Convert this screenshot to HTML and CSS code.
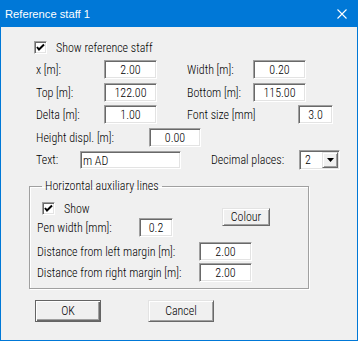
FILE: index.html
```html
<!DOCTYPE html>
<html lang="en">

<head>
  <meta charset="UTF-8">
  <title>Reference staff 1</title>
  <link rel="stylesheet" href="styles.css">
</head>

<body>
  <div class="window">
    <div class="titlebar">
      <span class="title">Reference staff 1</span>
      <svg class="close" width="10" height="10" viewBox="0 0 10 10">
        <path d="M0.5 0.5 L9.5 9.5 M9.5 0.5 L0.5 9.5" stroke="#fff" stroke-width="1.1" fill="none" />
      </svg>
    </div>

    <div class="content">
      <div class="check-row">
        <span class="checkbox"><svg width="11" height="11" viewBox="0 0 11 11"><path d="M2 5 L4 7.5 L9 2.5" stroke="#000" stroke-width="2" fill="none" /></svg></span>
        <span>Show reference staff</span>
      </div>

      <div class="row row-1">
        <span class="lbl w69">x [m]:</span>
        <input class="field w53" value="2.00">
        <span class="spacer"></span>
        <span class="lbl w68">Width [m]:</span>
        <input class="field w53" value="0.20">
      </div>
      <div class="row row-2">
        <span class="lbl w69">Top [m]:</span>
        <input class="field w53" value="122.00">
        <span class="spacer"></span>
        <span class="lbl w68">Bottom [m]:</span>
        <input class="field w53" value="115.00">
      </div>
      <div class="row row-3">
        <span class="lbl w69">Delta [m]:</span>
        <input class="field w53" value="1.00">
        <span class="spacer"></span>
        <span class="lbl w113">Font size [mm]</span>
        <input class="field w35" value="3.0">
      </div>
      <div class="row row-4">
        <span class="lbl w114">Height displ. [m]:</span>
        <input class="field w52" value="0.00">
      </div>
      <div class="row row-5">
        <span class="lbl w45">Text:</span>
        <input class="field w101 left short" value="m AD">
        <span class="spacer"></span>
        <span class="lbl w90">Decimal places:</span>
        <div class="combo">
          <span class="combo-value">2</span>
          <span class="combo-btn"><svg width="7" height="4" viewBox="0 0 7 4"><path d="M0 0 H7 L3.5 4 Z" fill="#000" /></svg></span>
        </div>
      </div>

      <fieldset class="group">
        <legend>Horizontal auxiliary lines</legend>
        <div class="group-top">
          <div class="group-left">
            <div class="check-row show-row">
              <span class="checkbox"><svg width="11" height="11" viewBox="0 0 11 11"><path d="M2 5 L4 7.5 L9 2.5" stroke="#000" stroke-width="2" fill="none" /></svg></span>
              <span>Show</span>
            </div>
            <div class="row pen-row">
              <span class="lbl w104">Pen width [mm]:</span>
              <input class="field w34" value="0.2">
            </div>
          </div>
          <button class="btn colour-btn">Colour</button>
        </div>
        <div class="row dist-left">
          <span class="lbl w164">Distance from left margin [m]:</span>
          <input class="field w53" value="2.00">
        </div>
        <div class="row dist-right">
          <span class="lbl w164">Distance from right margin [m]:</span>
          <input class="field w53" value="2.00">
        </div>
      </fieldset>

      <div class="buttons">
        <button class="btn big default">OK</button>
        <button class="btn big">Cancel</button>
      </div>
    </div>
  </div>
</body>

</html>
```

FILE: styles.css
```css
body {
  margin: 0;
  width: 358px;
  height: 341px;
  overflow: hidden;
  font-family: Roboto, "Liberation Sans", sans-serif;
  font-stretch: 75%;
  font-weight: 350;
  font-size: 12px;
  color: #000;
}

.window {
  box-sizing: border-box;
  width: 358px;
  height: 341px;
  border: 1px solid #0078d7;
  border-top: none;
  background-color: #f0f0f0;
}

.titlebar {
  display: flex;
  align-items: center;
  justify-content: space-between;
  height: 27px;
  margin: 0 -1px;
  padding: 0 11px 0 5px;
  background-color: #0078d7;
  color: #fff;
}

.title {
  font-family: "Liberation Sans", sans-serif;
  font-stretch: normal;
  font-weight: 400;
  font-size: 11.2px;
}

.close {
  display: block;
}

.content {
  padding: 14px 0 0 33px;
}

.check-row {
  display: flex;
  align-items: center;
  height: 13px;
  gap: 9px;
}

.checkbox {
  box-sizing: border-box;
  display: flex;
  align-items: center;
  justify-content: center;
  width: 13px;
  height: 13px;
  background: #fff;
  border: 1px solid;
  border-color: #a0a0a0 #fff #fff #a0a0a0;
  box-shadow: inset 1px 1px #696969, inset -1px -1px #e3e3e3;
}

.row {
  display: flex;
  align-items: center;
  height: 19px;
}

.row-1 { margin-top: 6px; }
.row-2 { margin-top: 4px; }
.row-3 { margin-top: 3px; }
.row-4 { margin-top: 4px; }
.row-5 { margin-top: 3px; height: 20px; }

.lbl {
  flex: none;
  padding-left: 2px;
  box-sizing: border-box;
  white-space: nowrap;
}

.w45 { width: 46px; }
.w68 { width: 68px; }
.w69 { width: 70px; }
.w90 { width: 90px; }
.w104 { width: 104px; }
.w113 { width: 113px; }
.w114 { width: 115px; }
.w164 { width: 164px; }

.spacer {
  flex: none;
  width: 28px;
}

.field {
  box-sizing: border-box;
  height: 19px;
  margin: 0;
  padding: 1px 0 0;
  font: inherit;
  text-align: center;
  background: #fff;
  border: 1px solid;
  border-color: #a0a0a0 #fff #fff #a0a0a0;
  box-shadow: inset 1px 1px #696969, inset -1px -1px #e3e3e3;
  outline: none;
}

.field.left {
  text-align: left;
  padding-left: 2px;
}

.field.short { height: 18px; }

.w34 { width: 34px; }
.w35 { width: 35px; }
.w52 { width: 52px; }
.w53 { width: 53px; }
.w101 { width: 101px; }

.combo {
  box-sizing: border-box;
  display: flex;
  align-items: center;
  justify-content: space-between;
  width: 41px;
  height: 20px;
  padding: 1px 1px 1px 2px;
  background: #fff;
  border: 1px solid;
  border-color: #a0a0a0 #fff #fff #a0a0a0;
  box-shadow: inset 1px 1px #696969, inset -1px -1px #e3e3e3;
}

.combo-value {
  padding-left: 3px;
}

.combo-btn {
  box-sizing: border-box;
  display: flex;
  align-items: center;
  justify-content: center;
  width: 16px;
  height: 16px;
  background: #f0f0f0;
  border: 1px solid;
  border-color: #e3e3e3 #696969 #696969 #e3e3e3;
  box-shadow: inset 1px 1px #fff, inset -1px -1px #a0a0a0;
}

.group {
  width: 280px;
  box-sizing: border-box;
  margin: 9px 0 0 -5px;
  padding: 9px 0 6px 5px;
  border: 1px solid #a0a0a0;
  box-shadow: inset 1px 1px #fff, 1px 1px #fff;
}

.group legend {
  margin-left: 7px;
  padding: 0 3px;
  line-height: 14px;
}

.group-top {
  display: flex;
  align-items: flex-start;
}

.group-left {
  width: 187px;
}

.show-row {
  margin-left: 7px;
}

.pen-row {
  margin-top: 3px;
}

.dist-left { margin-top: 5px; }
.dist-right { margin-top: 2px; }

.btn {
  box-sizing: border-box;
  margin: 0;
  padding: 0;
  font: inherit;
  color: #000;
  background: #f0f0f0;
  border: 1px solid;
  border-color: #e3e3e3 #696969 #696969 #e3e3e3;
  box-shadow: inset 1px 1px #fff, inset -1px -1px #a0a0a0;
}

.colour-btn {
  width: 48px;
  height: 18px;
  margin-top: 6px;
}

.buttons {
  display: flex;
  gap: 47px;
  margin-top: 11px;
  padding-left: 1px;
}

.btn.big {
  width: 66px;
  height: 22px;
}

.btn.default {
  border-color: #646464;
  box-shadow: inset 1px 1px #fff, inset -1px -1px #696969, inset -2px -2px #a0a0a0;
}
```
